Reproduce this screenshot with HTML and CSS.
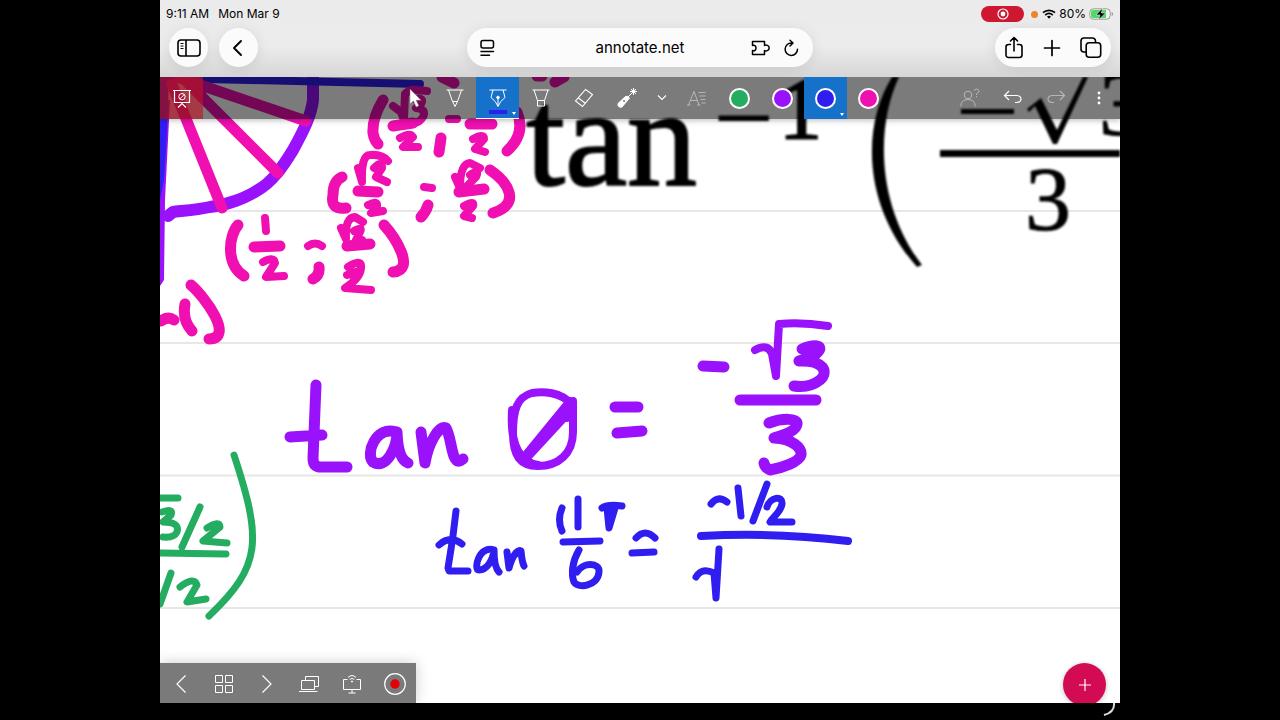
FILE: index.html
```html
<!DOCTYPE html>
<html lang="en">
<head>
<meta charset="utf-8">
<meta name="viewport" content="width=device-width, initial-scale=1">
<title>annotate.net</title>
<link rel="stylesheet" href="styles.css">
</head>
<body>
<div class="tablet">
  <header class="browser">
    <div class="status">
      <div class="status-left"><span>9:11 AM</span><span>Mon Mar 9</span></div>
      <div class="status-right">
        <span class="rec-pill"><svg width="12" height="12" viewBox="0 0 12 12"><circle cx="6" cy="6" r="5" fill="none" stroke="#fff" stroke-width="1.2"/><circle cx="6" cy="6" r="2.4" fill="#fff"/></svg></span>
        <span class="mic-dot"></span>
        <svg width="14" height="10" viewBox="0 0 14 10" fill="none" stroke="#000" stroke-width="1.7"><path d="M1 3.7C4.500.5 9.500.5 13 3.700M3.200 6.100C5.500 4 8.500 4 10.800 6.100"/><path d="M5 7.600Q7 6 9 7.600L7 9.700z" fill="#000" stroke="none"/></svg>
        <span>80%</span>
        <svg class="battery" width="25" height="14" viewBox="0 0 25 14"><rect x=".8" y="1.800" width="20.400" height="10.400" rx="3.500" fill="#f4f4f4" stroke="#999"/><path d="M4 3h13v8H4a2 2 0 0 1-2-2V5a2 2 0 0 1 2-2z" fill="#4cd964"/><path d="M22.600 5v4q1.600-.5 1.600-2t-1.600-2" fill="#999"/><path d="M13.500 1L7 8h4l-1.500 5L16.500 6h-4z" fill="#000" stroke="#eee" stroke-width=".6"/></svg>
      </div>
    </div>
    <div class="controls">
      <div class="left-controls">
        <button class="round" aria-label="Sidebar"><svg width="24" height="20" viewBox="0 0 24 20" fill="none" stroke="#000" stroke-width="1.600"><rect x="1" y="2" width="22" height="16" rx="3"/><path d="M9 2v16"/><path d="M3.500 5.500h3M3.500 8h3M3.500 10.500h3" stroke-width="1"/></svg></button>
        <button class="round" aria-label="Back"><svg width="20" height="20" viewBox="0 0 20 20" fill="none" stroke="#000" stroke-width="1.900" stroke-linecap="round" stroke-linejoin="round"><path d="M12 3L5 10l7 7"/></svg></button>
      </div>
      <div class="address">
        <button aria-label="Page menu"><svg width="16" height="18" viewBox="0 0 16 18" fill="none" stroke="#000" stroke-width="1.500" stroke-linecap="round"><rect x="1" y="1.500" width="12.500" height="7.500" rx="2"/><path d="M1 12.500h12.500M1 16.300h8.500"/></svg></button>
        <input type="text" aria-label="Address" value="annotate.net">
        <button aria-label="Extensions"><svg width="20" height="18" viewBox="0 0 20 18" fill="none" stroke="#000" stroke-width="1.500" stroke-linejoin="round"><path d="M2.500 2.500H14.500V6.500C16 5.500 19.200 6.500 19.200 9S16 12.500 14.500 11.500V15.500H2.500V11.500C4.500 12.500 6 11 6 9S4.500 5.600 2.500 6.500Z"/></svg></button>
        <button aria-label="Reload"><svg width="18" height="18" viewBox="0 0 18 18" fill="none" stroke="#000" stroke-width="1.500" stroke-linecap="round" stroke-linejoin="round"><path d="M9.500 4a6.200 6.200 0 1 0 6 6.200M8 1.200L11 4L8 7"/></svg></button>
      </div>
      <div class="right-controls">
        <button aria-label="Share"><svg width="20" height="24" viewBox="0 0 20 24" fill="none" stroke="#000" stroke-width="1.600" stroke-linecap="round" stroke-linejoin="round"><path d="M6.500 8.500H4.500A2.500 2.500 0 0 0 2 11v8a2.500 2.500 0 0 0 2.500 2.500h11A2.500 2.500 0 0 0 18 19v-8a2.500 2.500 0 0 0-2.500-2.500h-2M10 15V1.500M6.500 5L10 1.500 13.500 5"/></svg></button>
        <button aria-label="New tab"><svg width="18" height="18" viewBox="0 0 18 18" stroke="#000" stroke-width="1.700" stroke-linecap="round"><path d="M9 1.500v15M1.500 9h15"/></svg></button>
        <button aria-label="Tabs"><svg width="22" height="22" viewBox="0 0 22 22" fill="none" stroke="#000" stroke-width="1.600"><path d="M6 15H4a3 3 0 0 1-3-3V4a3 3 0 0 1 3-3h8.500a3 3 0 0 1 3 3v1.500"/><rect x="6.200" y="5.800" width="14.500" height="14.500" rx="3"/></svg></button>
      </div>
    </div>
  </header>

  <main class="board">
    <svg class="canvas" viewBox="160 77 960 626" preserveAspectRatio="xMinYMin slice" role="img" aria-label="Whiteboard page">
      <path class="rule" d="M160 211H1120M160 343H1120M160 475.500H1120M160 608H1120"/>
      <g class="formula">
        <text class="tan" x="526" y="185">tan</text>
        <text class="minus" x="713" y="154">−</text>
        <text class="exp" x="779" y="138">1</text>
        <text class="digit" x="1099" y="135">3</text>
        <text class="digit" x="1025" y="230">3</text>
        <path d="M892 77C862 125 862 205 917 267L922 265C876 205 876 125 899 77Z"/>
        <path d="M940 150H1120V157H940ZM961 109H1014V114H961Z"/>
        <path d="M1027 109L1041 98L1057 130L1083 77H1088L1057 144H1053L1035 106L1029 112Z"/>
      </g>
      <!-- unit circle -->
      <path class="fill-violet" d="M160 100H170L165 200L164 280L160 286Z"/>
      <path class="fill-blue" d="M160 77H169L167 130L164 180L160 200Z"/>
      <path class="ink violet w12" d="M313 77V100C311 116 304 130 293 150C282 168 272 182 258 190C246 198 227 205 210 207C196 210 180 211 173 212L168 216"/>
      <path class="ink blue w8" d="M160 78L250 80L420 84"/>
      <g class="ink pink w11">
        <path d="M172 84L222 208M182 77L278 173M180 78L306 121"/>
        <path d="M383 100Q372 118 373 133Q374 140 378 144M442 77L454 83M555 82L564 77M537 76H542M393 126L413 123M441 138L439 152M470 124H492M517 112Q526 134 507 151"/>
        <path d="M342 177Q333 181 333 195Q330 210 346 208M358 191L378 192M428 205Q426 212 421 217M459 192L484 189M490 170C508 182 522 204 493 213"/>
        <path d="M238 225C229 235 225 264 244 276M254 247L280 246M319 267Q320 275 313 279M347 246L370 244M384 225C394 236 417 270 393 272"/>
        <path d="M161 321Q168 316 174 320M185 304Q182 320 192 331M191 285C205 297 235 338 209 339"/>
      </g>
      <g class="ink pink w8">
        <path d="M393 106L401 112L404 120L405 94Q409 89 417 90L427 91M415 99Q425 97 421 104L416 108Q427 109 423 117Q418 125 410 122"/>
        <path d="M400 138Q410 132 413 137L403 147H418M449 119H457M473 139Q484 133 484 139L475 149L485 152"/>
        <path d="M358 168L362 182Q361 155 370 155Q382 154 388 161M374 168Q382 160 382 168L376 177L387 182M368 205Q378 200 377 206L371 213L383 211M424 187L432 188"/>
        <path d="M455 177L460 188Q460 164 470 163L480 168M470 175Q480 168 476 177L465 188M464 206Q475 200 473 206L464 216L472 218"/>
        <path d="M265 218L266 231M263 262Q274 256 275 263L266 277L284 276M308 246Q315 241 322 246"/>
        <path d="M341 228L346 239Q345 217 355 217L363 222M354 231Q363 226 360 232L356 240L362 240M348 267Q361 259 361 266Q362 277 345 288L371 290M347 275L359 271L353 276"/>
      </g>
      <!-- tan θ = -√3/3 -->
      <g class="ink violet w11">
        <path d="M316 385L313 458Q313 466 319 467H347M290 437L322 435"/>
        <path d="M396 432C376 425 365 454 373 462C386 470 397 448 397 432Q398 459 408 463M421 432L425 463C428 445 438 425 446 428C452 438 451 463 460 461L463 459"/>
        <path d="M615 407H638M617 433L642 431M703 366L724 367M740 400L816 400"/>
        <path d="M802 349C814 344 824 345 818 352C814 358 798 361 799 361C824 360 829 372 820 380C811 387 800 387 794 386"/>
        <path d="M769 423C782 418 798 418 797 424C796 433 778 436 774 438C793 439 802 448 801 455C799 462 782 468 770 470Q765 468 764 463"/>
      </g>
      <g class="ink violet w8">
        <path d="M571 404C561 392 543 391 532 393C517 397 513 410 513 433C513 456 520 466 538 466C558 466 573 454 573 432V401M569 402L524 457M512 410Q509 460 538 465M570 401L567 418L573 408L525 460"/>
        <path d="M755 350Q768 343 772 354L776 376L779 324Q802 322 828 326"/>
      </g>
      <!-- tan 11π/6 = (-1/2)/√ -->
      <g class="ink blue w7">
        <path d="M456 511Q453 540 448 568L449 571H468M439 545Q450 535 462 544"/>
        <path d="M494 550C479 545 473 570 479 570C487 570 493 560 494 550Q494 567 499 572M507 552L509 568C513 553 519 549 521 551Q522 562 524 566"/>
        <path d="M562 508Q557 520 562 531M578 499V527M563 542L600 541M602 508Q608 504 622 506"/>
        <path class="fill-blue" d="M607 508L609 528L615 508Z"/>
        <path d="M579 550C572 562 571 574 574 582C578 589 598 586 599 572C600 562 583 562 577 572"/>
        <path d="M636 538Q645 528 655 538M632 553L654 552M711 504Q718 495 727 502M738 488L741 516M767 484L753 521M767 507C770 497 783 495 782 504C781 512 772 518 770 522L792 522"/>
        <path d="M696 577Q702 567 714 573L716 598L719 549"/>
      </g>
      <path class="ink blue w8" d="M701 536Q776 532 848 541"/>
      <!-- green fraction -->
      <g class="ink green w7">
        <path d="M158 498H178M162 512Q174 508 171 515L163 522Q180 522 177 532Q174 538 163 537M200 507L182 547M207 528Q220 520 220 527L203 541L227 543M158 553L226 554M171 573L160 604M180 587Q194 576 197 585L187 602L206 599M234 455C262 540 262 566 209 616"/>
      </g>
    </svg>

    <nav class="toolbar" aria-label="Drawing tools">
      <button class="tool board-tool" aria-label="Board"><svg width="20" height="20" viewBox="0 0 20 20" fill="none" stroke="#fff"><path d="M1 2.500h18M2.500 3v11.500h15V3M10 14.500V16M6 19.500l4-4 4 4" stroke-width="1.200"/><circle cx="10" cy="8.700" r="3.200"/><path d="M7.800 11L12.200 6.500"/></svg></button>
      <div class="tools">
        <button class="tool" aria-label="Pencil"><svg width="20" height="20" viewBox="0 0 20 20" fill="none" stroke="#fff"><path d="M1.500 2h17M3.500 2l4 11.500L10 18.500l2.500-5L16.500 2M7.500 13.500h5"/></svg></button>
        <button class="tool selected pen" aria-label="Pen"><svg width="20" height="20" viewBox="0 0 20 20" fill="none" stroke="#fff"><path d="M1.500 2h17M5 2L3 9.500Q8 13 10 18.500Q12 13 17 9.500L15 2M10 18V10.500"/><circle cx="10" cy="9.500" r="1.300" fill="#fff"/></svg></button>
        <button class="tool" aria-label="Highlighter"><svg width="20" height="20" viewBox="0 0 20 20" fill="none" stroke="#fff"><path d="M1.500 2h17M3 2l3.500 10.500h7L17 2M6.500 12.500V18h7v-5.500"/></svg></button>
        <button class="tool" aria-label="Eraser"><svg width="20" height="20" viewBox="0 0 20 20" fill="none" stroke="#fff" stroke-width="1.100"><path d="M11.500 1.500l7 5L8.500 18.500L1.500 13zM4.500 10L11.500 15.500"/></svg></button>
        <button class="tool" aria-label="Laser pointer"><svg width="22" height="22" viewBox="0 0 22 22" stroke="#fff"><path d="M2 16.500L9.500 9.500Q12 8.500 13.500 11L6 20Q1.500 21 2 16.500z" fill="#fff"/><path d="M12 10L17 5M17.500 1v7M14 4.500h7M15 2l5 5M20 2l-5 5"/><circle cx="17.500" cy="4.500" r="1.500" fill="#fff"/><circle cx="8" cy="14" r="1" fill="#777" stroke="none"/></svg></button>
        <button class="tool narrow" aria-label="More tools"><svg width="10" height="8" viewBox="0 0 10 8" fill="none" stroke="#fff" stroke-width="1.100"><path d="M1 1.500l4 4 4-4"/></svg></button>
        <button class="tool dim" aria-label="Text"><svg width="20" height="18" viewBox="0 0 20 18" fill="none" stroke="#fff"><path d="M1.500 16L7 2.500 12 16M3.500 11.500h7M0 16h3.500M10 16h3.500M11.500 3.500h7M12.500 7h6M13.500 10.500h5M14.500 14h4"/></svg></button>
        <button class="tool" aria-label="Green"><span class="swatch sw-green"></span></button>
        <button class="tool" aria-label="Violet"><span class="swatch sw-violet"></span></button>
        <button class="tool selected" aria-label="Blue"><span class="swatch sw-blue"></span></button>
        <button class="tool" aria-label="Pink"><span class="swatch sw-pink"></span></button>
      </div>
      <div class="actions">
        <button class="tool dim" aria-label="Participants"><svg width="20" height="20" viewBox="0 0 20 20" fill="none" stroke="#fff"><circle cx="8" cy="7" r="3.800"/><path d="M.8 18.500Q1 11.500 8 11.500T15.200 18.500M14 3Q14.500 1 16.500 1T19 3Q19 4.500 17.500 5T16.500 7M16.500 8v1.300"/></svg></button>
        <button class="tool" aria-label="Undo"><svg width="20" height="20" viewBox="0 0 20 20" fill="none" stroke="#fff" stroke-width="1.200"><path d="M6 3L1.500 7.500 6 12M1.500 7.500H14Q18 8 18 11T14 14.500H12"/></svg></button>
        <button class="tool dim" aria-label="Redo"><svg width="20" height="20" viewBox="0 0 20 20" fill="none" stroke="#fff" stroke-width="1.200"><path d="M14 3l4.500 4.500L14 12M18.500 7.500H6Q2 8 2 11t4 3.500h2"/></svg></button>
        <button class="tool" aria-label="Menu"><svg width="4" height="16" viewBox="0 0 4 16" fill="#fff"><circle cx="2" cy="3" r="1.400"/><circle cx="2" cy="8" r="1.400"/><circle cx="2" cy="13" r="1.400"/></svg></button>
      </div>
      <svg class="cursor" width="15" height="20" viewBox="0 0 15 20"><path d="M1 1v15l3.500-3 2.600 6 2.700-1.200-2.600-5.600H12z" fill="#fff" stroke="#777" stroke-width=".5"/></svg>
    </nav>

    <nav class="pager" aria-label="Pages">
      <button aria-label="Previous page"><svg width="20" height="20" viewBox="0 0 20 20" fill="none" stroke="#fff" stroke-width="1.200"><path d="M14.500 1.500L6 10l8.500 8.500"/></svg></button>
      <button aria-label="All pages"><svg width="20" height="20" viewBox="0 0 20 20" fill="none" stroke="#fff"><path d="M1.500 1.500h7v7h-7zM11.500 1.500h7v7h-7zM1.500 11.500h7v7h-7zM11.500 11.500h7v7h-7z"/></svg></button>
      <button aria-label="Next page"><svg width="20" height="20" viewBox="0 0 20 20" fill="none" stroke="#fff" stroke-width="1.200"><path d="M5.500 1.500L14 10l-8.500 8.500"/></svg></button>
      <button aria-label="Screens"><svg width="22" height="18" viewBox="0 0 22 18" fill="none" stroke="#fff"><path d="M3.500 5.500h13v9h-13zM1 16.500h18.500M7.500 5.500v-4h13v10h-4"/></svg></button>
      <button aria-label="Cast"><svg width="20" height="20" viewBox="0 0 20 20" fill="none" stroke="#fff"><path d="M5.500 5.500H1.500v10h17v-10h-4M10 15.500v3.500M6.500 19h7M6 3.500Q10-.5 14 3.500M7.700 5.500Q10 3.200 12.300 5.500"/><circle cx="10" cy="7.500" r=".6" fill="#fff"/></svg></button>
      <button aria-label="Record"><svg width="22" height="22" viewBox="0 0 22 22"><circle cx="11" cy="11" r="10.300" fill="none" stroke="#fff" stroke-width="1.200"/><circle cx="11" cy="11" r="4.700" fill="#e30008"/></svg></button>
    </nav>
    <button class="add" aria-label="Add"><svg width="14" height="14" viewBox="0 0 14 14" stroke="#fff" stroke-width="1.200"><path d="M7 1v12M1 7h12"/></svg></button>
  </main>
  <footer class="edge"><svg width="16" height="16" viewBox="0 0 16 16" fill="none" stroke="#ddd" stroke-width="2"><path d="M13 0Q14 9 3 12"/></svg></footer>
</div>
</body>
</html>
```
FILE: styles.css
```css
* { box-sizing: border-box; }
body {
  margin: 0;
  background: #000;
  font-family: Inter, Roboto, sans-serif;
  color: #000;
}
button {
  display: flex;
  align-items: center;
  justify-content: center;
  padding: 0;
  border: 0;
  background: none;
}
svg { display: block; flex: none; }
.tablet {
  display: flex;
  flex-direction: column;
  width: 75%;
  height: 100vh;
  margin: 0 auto;
  overflow: hidden;
}

/* Browser chrome */
.browser {
  background: linear-gradient(#ebebeb 0, #ececec 60%, #d6d6d6 100%);
  padding: 7px 6px 10px 6px;
}
.status {
  display: flex;
  justify-content: space-between;
  height: 14px;
  margin-bottom: 7px;
  font-size: 12px;
  line-height: 14px;
  font-weight: 400;
}
.status-left { display: flex; gap: 9px; }
.status-right { display: flex; align-items: center; gap: 3px; }
.rec-pill {
  display: flex;
  align-items: center;
  justify-content: center;
  width: 43px;
  height: 16px;
  margin-right: 4px;
  border-radius: 8px;
  background: #ce1730;
}
.mic-dot {
  width: 7px;
  height: 7px;
  margin-right: 1px;
  border-radius: 50%;
  background: #ec8430;
}
.controls {
  display: grid;
  grid-template-columns: 1fr minmax(0, 346px) 1fr;
  align-items: center;
  padding: 0 3px;
}
.left-controls { display: flex; gap: 11px; }
.round, .address, .right-controls {
  height: 39px;
  border-radius: 20px;
  background: #fbfbfb;
  box-shadow: 0 2px 14px #00000018;
}
.round { width: 39px; }
.address {
  display: flex;
  align-items: center;
  gap: 12px;
  padding: 0 13px;
}
.address input {
  flex: 1;
  min-width: 0;
  padding: 0 0 0 34px;
  border: 0;
  background: none;
  color: #000;
  font: 400 15px/20px Inter, Roboto, sans-serif;
  text-align: center;
}
.right-controls {
  display: flex;
  align-items: center;
  justify-self: end;
  gap: 19px;
  padding: 0 9px;
}

/* Whiteboard */
.board {
  position: relative;
  flex: 1;
  min-height: 0;
  background: #fff;
  overflow: hidden;
}
.canvas { width: 100%; height: 100%; }
.rule { stroke: #e7e7e7; stroke-width: 2px; }
.formula { fill: #000; filter: blur(1px); }
.tan { font: 140px "Liberation Serif", serif; stroke: #000; stroke-width: 2px; }
.minus { font: 108px "Liberation Serif", serif; }
.exp { font: 86px "Liberation Serif", serif; stroke: #000; stroke-width: 2px; }
.digit { font: 92px "Liberation Serif", serif; stroke: #000; stroke-width: 1px; }
.ink { fill: none; stroke-linecap: round; stroke-linejoin: round; }
.violet { stroke: #9a12fb; }
.blue { stroke: #301df0; }
.pink { stroke: #f00fb0; }
.green { stroke: #24ad60; }
.fill-violet { fill: #9a12fb; }
.fill-blue { fill: #301df0; }
.w7 { stroke-width: 7px; }
.w8 { stroke-width: 8px; }
.w11 { stroke-width: 11px; }
.w12 { stroke-width: 12px; }

.toolbar {
  position: absolute;
  inset: 0 0 auto;
  display: flex;
  height: 42px;
  background: #00000084;
  box-shadow: 0 1px 6px #0000004d;
}
.tools { display: flex; margin: 0 58px 0 auto; }
.actions { display: flex; }
.tool { position: relative; width: 43px; height: 42px; }
.narrow { width: 27px; }
.dim svg { opacity: .45; }
.board-tool { background: #be1428a6; }
.selected { background: #1671cb; }
.selected::after {
  content: "";
  position: absolute;
  right: 3px;
  bottom: 3px;
  border: 2px solid transparent;
  border-top: 3px solid #fff;
  border-bottom: 0;
}
.pen { border-bottom: 1px solid #fff; }
.pen::before {
  content: "";
  position: absolute;
  right: 12px;
  bottom: 4px;
  left: 13px;
  height: 4px;
  background: #301df0;
}
.swatch {
  width: 21px;
  height: 21px;
  border: 2px solid #fff;
  border-radius: 50%;
}
.sw-green { background: #24ad60; }
.sw-violet { background: #9a12fb; }
.sw-blue { background: #301df0; }
.sw-pink { background: #f00fb0; }
.cursor { position: absolute; left: 249px; top: 11px; }

.pager {
  position: absolute;
  bottom: 0;
  left: 0;
  display: grid;
  grid-template-columns: repeat(6, 1fr);
  width: 256px;
  height: 40px;
  background: #7a7a7a;
  box-shadow: 0 0 14px #00000033;
}
.pager button { min-width: 0; padding-top: 2px; }
.add {
  position: absolute;
  right: 14px;
  bottom: -3px;
  width: 43px;
  height: 43px;
  border-radius: 50%;
  background: #d30b55;
  box-shadow: 0 1px 5px #00000040;
}
.edge {
  display: flex;
  justify-content: flex-end;
  height: 17px;
  padding-right: 3px;
}
```
